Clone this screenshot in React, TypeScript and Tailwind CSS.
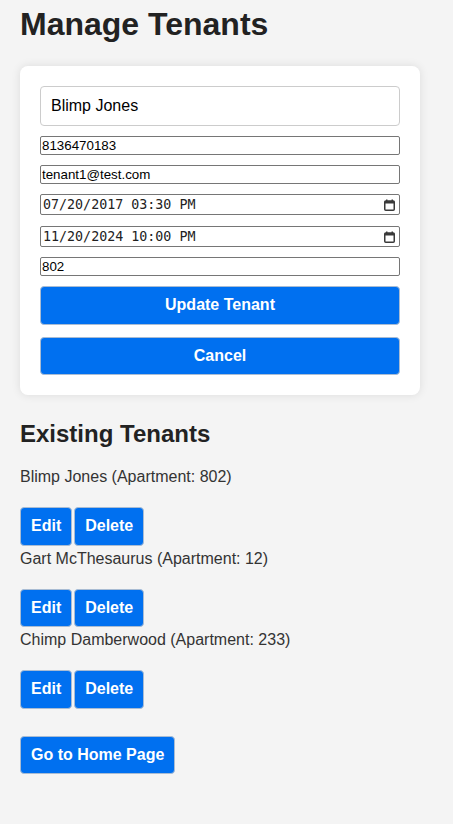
import React, { useState } from 'react';

type Tenant = { id: number; name: string; apartment: string };

const TENANTS: Tenant[] = [
  { id: 1, name: 'Blimp Jones', apartment: '802' },
  { id: 2, name: 'Gart McThesaurus', apartment: '12' },
  { id: 3, name: 'Chimp Damberwood', apartment: '233' },
];

function CalendarIcon() {
  return (
    <svg width="11" height="12" viewBox="0 0 11 12" className="shrink-0">
      <rect x="0.75" y="2" width="9.5" height="9.25" rx="1" fill="none" stroke="#3a3a3a" strokeWidth="1.5" />
      <rect x="0.75" y="2" width="9.5" height="2.5" fill="#3a3a3a" />
      <rect x="2" y="0.5" width="1.5" height="2" fill="#3a3a3a" />
      <rect x="7.5" y="0.5" width="1.5" height="2" fill="#3a3a3a" />
    </svg>
  );
}

// date fields drawn by hand so the text matches the native control
function DateField({ value }: { value: string }) {
  return (
    <div className="flex h-[21px] w-full items-center justify-between rounded-[2px] border border-[#767676] bg-white pl-[2px] pr-[4px]">
      <span className="whitespace-pre text-[13.33px] text-[#222] font-['DejaVu_Sans_Mono',monospace]">{value}</span>
      <CalendarIcon />
    </div>
  );
}

function PlainInput({ value }: { value: string }) {
  return (
    <input
      readOnly
      value={value}
      className="block h-[19px] w-full rounded-[2px] border border-[#767676] bg-white pl-[1px] text-[13.33px] leading-[17px] text-black outline-none"
    />
  );
}

const btn =
  'rounded-[4px] border border-[#a9bcd3] bg-[#0070f0] px-[10px] py-[9px] text-[16px] font-bold leading-[18.5px] text-white';

export default function App() {
  const [name, setName] = useState('Blimp Jones');

  return (
    <div className="min-h-[824px] bg-[#f4f4f4] px-[20px] pt-[6px] pb-[40px] text-[#333] font-['Liberation_Sans',Arial,sans-serif]">
      <h1 className="text-[32px] font-bold leading-[37px] text-[#222]">Manage Tenants</h1>

      <div className="mt-[23px] w-[400px] rounded-[8px] bg-white p-[20px] shadow-[0_0_10px_rgba(0,0,0,0.1)]">
        <input
          value={name}
          onChange={(e) => setName(e.target.value)}
          className="block h-[40px] w-full rounded-[4px] border border-[#ccc] px-[10px] text-[16px] text-black outline-none"
        />
        <div className="mt-[10px] flex flex-col gap-[10px]">
          <PlainInput value="8136470183" />
          <PlainInput value="tenant1@test.com" />
          <div className="h-[22px]">
            <DateField value="07/20/2017 03:30 PM" />
          </div>
          <DateField value="11/20/2024 10:00 PM" />
          <PlainInput value="802" />
        </div>
        <button className={btn + ' mt-[10px] block w-full'}>Update Tenant</button>
        <button className={btn + ' mt-[12px] block w-full'}>Cancel</button>
      </div>

      <h2 className="mt-[25px] text-[24px] font-bold leading-[28px] text-[#222]">Existing Tenants</h2>

      <ul className="mt-[20px]">
        {TENANTS.map((t, i) => (
          <li key={t.id} className={i > 0 ? 'mt-[4px]' : ''}>
            <div className="text-[16px] leading-[18px]">
              {t.name} (Apartment: {t.apartment})
            </div>
            <div className="mt-[21px] flex gap-[2px]">
              <button className={btn}>Edit</button>
              <button className={btn}>Delete</button>
            </div>
          </li>
        ))}
      </ul>

      <button className={btn + ' mt-[27px]'}>Go to Home Page</button>
    </div>
  );
}
